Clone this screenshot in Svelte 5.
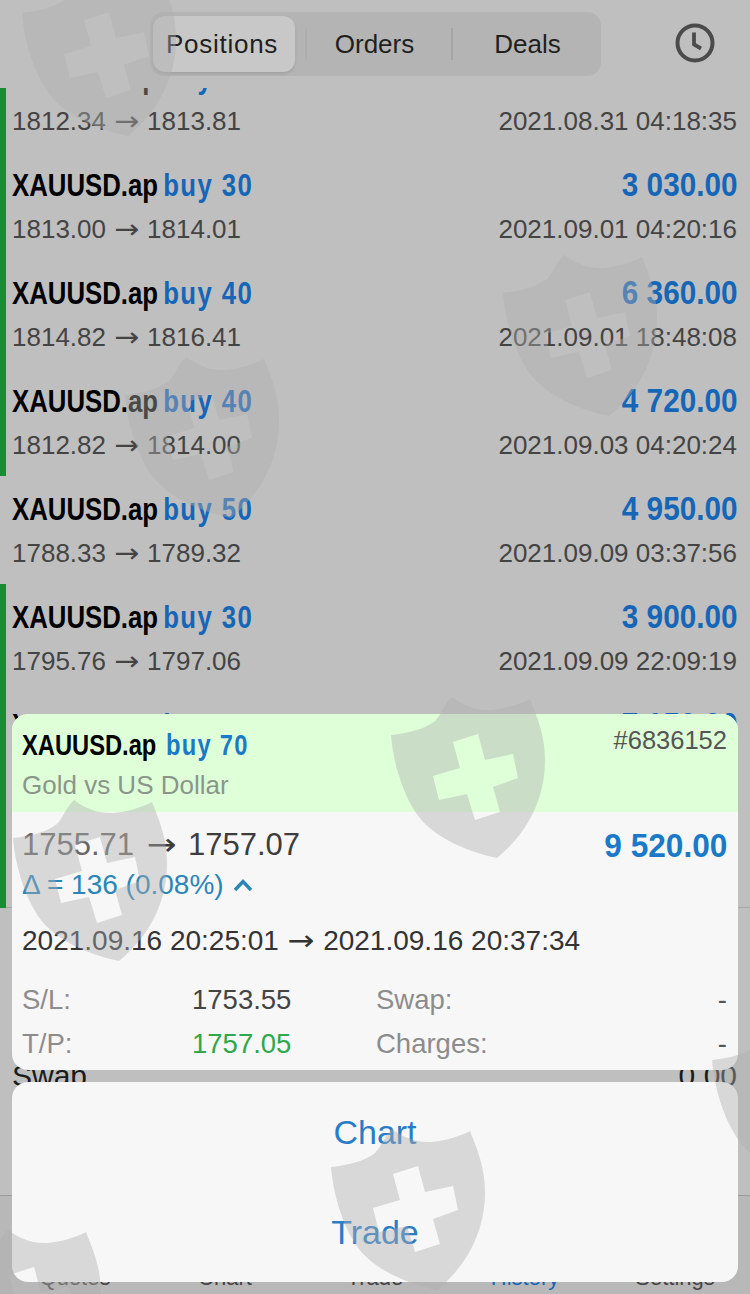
<script>
  const rows = [
    { lot: 30, profit: '4 410.00', open: '1812.34', close: '1813.81', time: '2021.08.31 04:18:35', win: true },
    { lot: 30, profit: '3 030.00', open: '1813.00', close: '1814.01', time: '2021.09.01 04:20:16', win: true },
    { lot: 40, profit: '6 360.00', open: '1814.82', close: '1816.41', time: '2021.09.01 18:48:08', win: true },
    { lot: 40, profit: '4 720.00', open: '1812.82', close: '1814.00', time: '2021.09.03 04:20:24', win: true },
    { lot: 50, profit: '4 950.00', open: '1788.33', close: '1789.32', time: '2021.09.09 03:37:56', win: false },
    { lot: 30, profit: '3 900.00', open: '1795.76', close: '1797.06', time: '2021.09.09 22:09:19', win: true },
    { lot: 50, profit: '7 150.00', open: '1760.21', close: '1761.64', time: '2021.09.14 20:11:45', win: true },
    { lot: 70, profit: '9 520.00', open: '1755.71', close: '1757.07', time: '2021.09.16 20:37:34', win: true }
  ];
  const tabs = ['Quotes', 'Chart', 'Trade', 'History', 'Settings'];
  const shields = [
    [22, 13], [503, 293], [125, 395], [391, 735], [13, 838], [331, 1167], [-53, 1268], [712, 1060]
  ];
  const shieldPath =
    'M0,0 C18,-2 34,-6 44,-14 C50,-20 54,-32 61,-38 C72,-30 85,-24 100,-25 C112,-26 128,-30 139,-36 C146,-18 154,0 154,25 C154,60 140,95 106,123 C70,115 40,100 25,78 C10,55 2,25 0,0 Z ' +
    'M62,7 L87,-1 L94,25 L122,19 L127,43 L102,52 L109,77 L84,85 L76,59 L48,65 L42,41 L69,33 Z';
</script>

<div class="page">
  <header class="top">
    <div class="segments">
      <div class="seg active"><span class="pos">Positions</span></div>
      <div class="seg sep faint">Orders</div>
      <div class="seg sep">Deals</div>
    </div>
    <svg class="clock" viewBox="0 0 40 40" width="40" height="40" aria-hidden="true">
      <circle cx="20" cy="20" r="17.5" fill="none" stroke="#4b4b4b" stroke-width="4" />
      <path d="M19 9.5 V21.5 L26 25.5" fill="none" stroke="#4b4b4b" stroke-width="3.8" />
    </svg>
  </header>

  <main class="list">
    <div class="scroller">
      {#each rows as r}
        <div class="row" class:win={r.win}>
          <div class="line1">
            <span class="title"><b class="sym">XAUUSD.ap</b> <b class="buy">buy {r.lot}</b></span>
            <b class="amount">{r.profit}</b>
          </div>
          <div class="line2">
            <span>{r.open}<span class="arr">→</span>{r.close}</span>
            <span>{r.time}</span>
          </div>
        </div>
      {/each}
      <div class="summary">
        <div class="sum-row"><span>Swap</span><span>0.00</span></div>
      </div>
    </div>
  </main>

  <nav class="tabs">
    {#each tabs as t}
      <span class="tab" class:current={t === 'History'}>{t}</span>
    {/each}
  </nav>

  <section class="card">
    <div class="card-head">
      <div class="head-left">
        <div class="card-title"><b class="sym">XAUUSD.ap</b> <b class="buy2">buy 70</b></div>
        <div class="desc">Gold vs US Dollar</div>
      </div>
      <div class="ticket">#6836152</div>
    </div>
    <div class="card-body">
      <div class="price-row">
        <span class="prices"><span class="open">1755.71</span><span class="arr">→</span>1757.07</span>
        <b class="amount big">9 520.00</b>
      </div>
      <div class="delta">Δ = 136 (0.08%)
        <svg viewBox="0 0 20 14" width="20" height="14" aria-hidden="true">
          <path d="M2 12 L10 3.5 L18 12" fill="none" stroke="#2a86b8" stroke-width="3.4" />
        </svg>
      </div>
      <div class="dates">2021.09.16 20:25:01<span class="arr">→</span>2021.09.16 20:37:34</div>
      <div class="grid">
        <span class="lbl">S/L:</span><span class="val">1753.55</span><span class="lbl">Swap:</span><span class="dash">-</span>
        <span class="lbl">T/P:</span><span class="val green">1757.05</span><span class="lbl">Charges:</span><span class="dash">-</span>
      </div>
    </div>
  </section>

  <section class="sheet">
    <div class="action">Chart</div>
    <div class="action">Trade</div>
  </section>

  <svg class="watermark" width="750" height="1294" viewBox="0 0 750 1294" aria-hidden="true">
    {#each shields as s}
      <path d={shieldPath} transform={`translate(${s[0]} ${s[1]})`} fill="rgb(174,174,174)" fill-opacity="0.42" fill-rule="evenodd" />
    {/each}
  </svg>
</div>

<style>
  :global(body) { margin: 0; background: #bfbfbf; }
  .page {
    position: relative;
    width: 750px;
    height: 1294px;
    overflow: hidden;
    display: flex;
    flex-direction: column;
    background: #bfbfbf;
    font-family: "Liberation Sans", Arial, sans-serif;
    color: #444;
  }
  .top {
    height: 88px;
    flex: none;
    display: flex;
    align-items: flex-start;
    padding: 12px 35px 0 150px;
    box-sizing: border-box;
    justify-content: space-between;
    background: #bfbfbf;
  }
  .segments {
    width: 451px;
    height: 64px;
    box-sizing: border-box;
    padding: 4px 3px;
    display: grid;
    grid-template-columns: 142px 156px 150px;
    background: #b4b4b4;
    border-radius: 14px;
  }
  .seg {
    display: flex;
    align-items: center;
    justify-content: center;
    font-size: 26px;
    color: #1f1f1f;
    border-radius: 12px;
    position: relative;
    padding-left: 3px;
  }
  .pos { letter-spacing: 0.75px; margin-left: -7px; }
  .active { background: #c8c8c8; box-shadow: 0 2px 3px rgba(0,0,0,.1); }
  .sep::before {
    content: "";
    position: absolute;
    left: 0;
    top: 12px;
    bottom: 12px;
    width: 2px;
    background: #a6a6a6;
  }
  .faint::before { left: 10px; background: #aeaeae; }
  .clock { margin-top: 11px; }
  .list {
    flex: 1;
    min-height: 0;
    overflow: hidden;
  }
  .scroller { margin-top: -44px; }
  .row {
    height: 108px;
    box-sizing: border-box;
    padding: 13px 13px 0 12px;
    position: relative;
  }
  .row.win::before {
    content: "";
    position: absolute;
    left: 0;
    top: 0;
    bottom: 0;
    width: 6px;
    background: #1a8c35;
  }
  .line1, .line2 {
    display: flex;
    justify-content: space-between;
    align-items: baseline;
    white-space: nowrap;
  }
  .line1 {
    height: 40px;
    line-height: 40px;
    font-size: 32px;
  }
  .title {
    display: inline-block;
    transform: scaleX(0.805);
    transform-origin: left center;
  }
  .amount {
    display: inline-block;
    font-size: 33px;
    transform: scaleX(0.9);
    transform-origin: right center;
    color: #1666b8;
  }
  .line2 {
    margin-top: 5px;
    height: 38px;
    line-height: 38px;
    font-size: 26px;
    color: #444;
  }
  .arr {
    display: inline-block;
    width: 1em;
    margin: 0 0.29em;
    text-align: center;
    font-family: "DejaVu Sans", sans-serif;
    font-size: 1em;
    line-height: 1;
    transform: scaleX(1.15);
  }
  .prices .arr { margin: 0 0.37em; }
  b { font-weight: 700; }
  .sym { color: #000; }
  .buy { color: #1666b8; letter-spacing: 1.75px; margin-left: -2.5px; }
  .buy2 { color: #1a7ac8; letter-spacing: 1.6px; margin-left: 4px; }
  .summary {
    border-top: 1px solid #a8a8a8;
    padding: 148px 13px 0 12px;
    margin-top: -1px;
  }
  .sum-row {
    display: flex;
    justify-content: space-between;
    font-size: 30px;
    line-height: 40px;
    color: #1a1a1a;
  }
  .tabs {
    flex: none;
    height: 99px;
    box-sizing: border-box;
    border-top: 1px solid #9a9a9a;
    background: #b8b8b8;
    display: grid;
    grid-template-columns: repeat(5, 150px);
    align-items: end;
    padding-bottom: 3px;
    justify-items: center;
  }
  .tab { font-size: 22px; line-height: 26px; color: #444; }
  .current { color: #1666b8; }
  .card {
    position: absolute;
    left: 12px;
    top: 714px;
    width: 726px;
    height: 356px;
    border-radius: 16px;
    overflow: hidden;
    background: #f7f7f7;
  }
  .card-head {
    height: 98px;
    background: #dfffd8;
    box-sizing: border-box;
    padding: 11px 11px 0 10px;
    display: flex;
    justify-content: space-between;
  }
  .card-title {
    font-size: 30px;
    line-height: 40px;
    white-space: nowrap;
    transform: scaleX(0.79);
    transform-origin: left center;
  }
  .desc { font-size: 26px; line-height: 32px; margin-top: 4px; color: #8b968a; }
  .ticket { font-size: 25.5px; line-height: 30px; color: #555; }
  .card-body { padding: 11px 11px 0 10px; }
  .price-row {
    display: flex;
    justify-content: space-between;
    align-items: flex-start;
    height: 44px;
    white-space: nowrap;
  }
  .prices { font-size: 31px; line-height: 40px; margin-top: 2px; color: #3d3d3d; }
  .open { color: #666; }
  .big { font-size: 34px; line-height: 44px; color: #1a7ac8; transform: scaleX(0.93); }
  .delta {
    display: flex;
    align-items: center;
    gap: 9px;
    font-size: 28px;
    line-height: 32px;
    margin-top: 2px;
    color: #2a86b8;
  }
  .dates { font-size: 28px; line-height: 36px; margin-top: 22px; color: #333; white-space: nowrap; }
  .grid {
    display: grid;
    grid-template-columns: 170px 184px 1fr auto;
    grid-auto-rows: 44px;
    align-items: center;
    font-size: 27.5px;
    margin-top: 19px;
  }
  .lbl { color: #8c8c8c; }
  .val { color: #444; }
  .green { color: #2ea84a; }
  .dash { color: #555; }
  .sheet {
    position: absolute;
    left: 12px;
    top: 1082px;
    width: 726px;
    height: 200px;
    border-radius: 16px;
    background: #f7f7f7;
    display: grid;
    grid-template-rows: 100px 100px;
  }
  .action {
    display: flex;
    align-items: center;
    justify-content: center;
    font-size: 34px;
    color: #2a7cc6;
  }
  .watermark { position: absolute; left: 0; top: 0; pointer-events: none; }
</style>
